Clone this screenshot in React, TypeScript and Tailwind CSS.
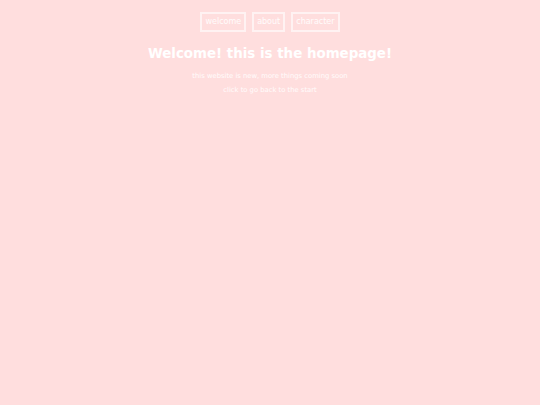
export default function App() {
  return (
    <div className="min-h-[405px] bg-[#ffdede] text-white font-['DejaVu_Sans',sans-serif] text-center">
      <nav className="flex justify-center gap-[6px] pt-[12px]">
        {['welcome', 'about', 'character'].map((label) => (
          <a
            key={label}
            href="#"
            className="border-2 border-white/60 px-[3px] h-[20px] leading-[16px] text-[8px] text-white/90"
          >
            {label}
          </a>
        ))}
      </nav>
      <h1 className="mt-[12px] text-[13.4px] font-bold leading-[20px]">Welcome! this is the homepage!</h1>
      <p className="mt-[5px] text-[6.8px] leading-[14px] text-white/90">this website is new, more things coming soon</p>
      <p className="text-[6.8px] leading-[14px] text-white/90">
        <a href="#">click to go back to the start</a>
      </p>
    </div>
  )
}
